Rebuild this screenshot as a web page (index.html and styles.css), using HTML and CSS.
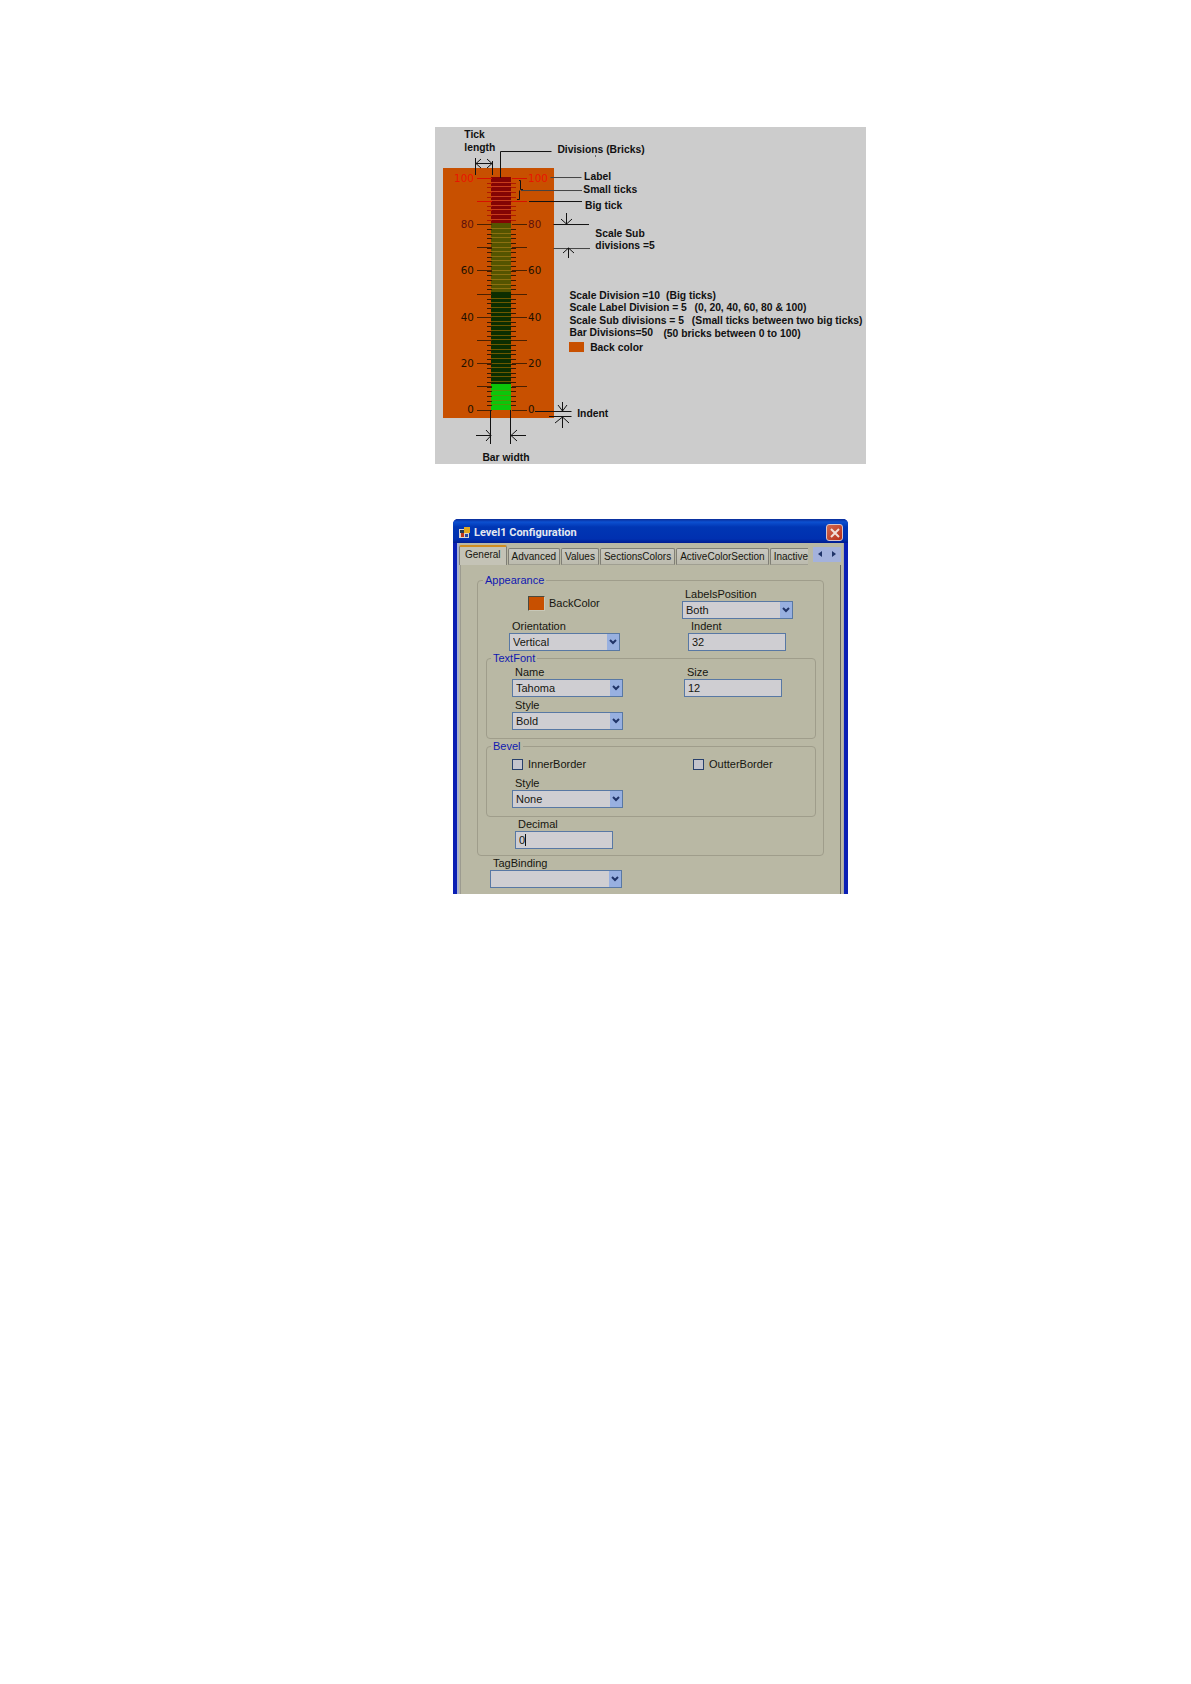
FILE: index.html
```html
<!DOCTYPE html>
<html lang="en">
<head>
<meta charset="utf-8">
<meta name="viewport" content="width=device-width, initial-scale=1">
<title>Level1 Configuration</title>
<link rel="stylesheet" href="styles.css">
</head>
<body>
<main class="page">
  <svg class="diagram" viewBox="0 0 500 391" role="img" aria-label="Level bar and its parts">
    <rect width="500" height="391" fill="#ccc"/>
    <svg width="500" height="391" viewBox="0 0 431 337">
      <rect x="8" y="41" width="111" height="250" fill="#c85000"/>
      <!-- bar sections -->
      <rect x="56" y="50" width="20" height="46" fill="#840404"/>
      <rect x="56" y="96" width="20" height="69" fill="#555400"/>
      <rect x="56" y="165" width="20" height="92" fill="#0c2e00"/>
      <rect x="56" y="257" width="20" height="26" fill="#0cc60a"/>
      <!-- brick gaps -->
      <g fill="none" stroke-width="20" stroke-dasharray="1 3.64" shape-rendering="crispEdges">
        <path d="M66 54.6V96" stroke="#c83c1c"/>
        <path d="M66 101V165" stroke="#8c7010"/>
        <path d="M66 170.6V257" stroke="#6c5800"/>
        <path d="M66 263.4V282" stroke="#4c9a08"/>
      </g>
      <!-- small ticks -->
      <g fill="none" stroke-width="5" stroke-dasharray="1 3.64" shape-rendering="crispEdges">
        <path d="M54 55.6V97M78 55.6V97" stroke="#b01800"/>
        <path d="M54 102V283M78 102V283" stroke="#3a1800"/>
      </g>
      <!-- big ticks -->
      <g fill="none" stroke-width="15" stroke-dasharray="1 22.2" shape-rendering="crispEdges">
        <path d="M49 51V96M84 51V96" stroke="#d81000"/>
        <path d="M49 97V284M84 97V284" stroke="#4a2000"/>
      </g>
      <rect x="134" y="215" width="15" height="10" fill="#c85000"/>
      <!-- leader lines and dimension arrows -->
      <g fill="none" stroke="#111" stroke-width="1">
        <path d="M65.500 51V24.500H116.500"/>
        <path d="M40.500 31V48M57.500 34V48M41 36.500H57M46 32L41 36.500L46 41M52 32L57 36.500L52 41"/>
        <path d="M115.500 50.500H146.500M86 63.500H147" stroke="#444"/>
        <path d="M84 53.500H85.500V62.500H88M84.500 63.500V72.500H82"/>
        <path d="M94 74.500H147M118.500 97.500H154"/>
        <path d="M118.500 121.500H155" stroke="#444"/>
        <path d="M131.500 86V97M126 92L131.500 97L137 92M133.500 131V121M128 126L133.500 121L139 126"/>
        <path d="M100 284.500H136.500M114 289.500H136.500"/>
        <path d="M127.500 275V284M123 278L127.500 284L132 278M127.500 301V290M120 296L127.500 290L134 296"/>
        <path d="M55.500 283V317M75.500 283V317"/>
        <path d="M41 308.500H56M51 303L56 308.500L51 314M91 308.500H76M82 303L76 308.500L82 314"/>
        <path d="M160.500 28V30" stroke="#666"/>
      </g>
    </svg>
    <g class="scale-label" text-anchor="end">
      <text class="alarm" x="45" y="64">100</text>
      <text class="warn" x="45" y="117">80</text>
      <text x="45" y="171">60</text>
      <text x="45" y="225">40</text>
      <text x="45" y="278">20</text>
      <text x="45" y="332">0</text>
    </g>
    <g class="scale-label">
      <text class="alarm" x="108" y="64">100</text>
      <text class="warn" x="108" y="117">80</text>
      <text x="108" y="171">60</text>
      <text x="108" y="225">40</text>
      <text x="108" y="278">20</text>
      <text x="108" y="332">0</text>
    </g>
    <g class="note">
      <text x="34" y="13">Tick</text>
      <text x="34" y="28">length</text>
      <text x="142" y="30">Divisions (Bricks)</text>
      <text x="173" y="62">Label</text>
      <text x="172" y="77">Small ticks</text>
      <text x="174" y="95">Big tick</text>
      <text x="186" y="128">Scale Sub</text>
      <text x="186" y="142">divisions =5</text>
      <text x="156" y="199">Scale Division =10</text>
      <text x="268" y="199">(Big ticks)</text>
      <text x="156" y="213">Scale Label Division = 5</text>
      <text x="301" y="213">(0, 20, 40, 60, 80 &amp; 100)</text>
      <text x="156" y="228">Scale Sub divisions = 5</text>
      <text x="298" y="229">(Small ticks between two big ticks)</text>
      <text x="156" y="243">Bar Divisions=50</text>
      <text x="265" y="244">(50 bricks between 0 to 100)</text>
      <text x="180" y="260">Back color</text>
      <text x="165" y="336">Indent</text>
      <text x="55" y="387">Bar width</text>
    </g>
  </svg>

  <section class="dialog" aria-labelledby="dialog-title">
    <header class="titlebar">
      <svg class="app-icon" width="11" height="11" viewBox="0 0 11 11" aria-hidden="true">
        <rect x="0" y="2" width="10" height="9" fill="#d8d4cc"/>
        <rect x="1" y="3" width="4" height="3" fill="#283c50"/>
        <rect x="5" y="0" width="6" height="6" fill="#e0a820"/>
        <rect x="2" y="6" width="3" height="4" fill="#c03818"/>
        <rect x="6" y="7" width="3" height="3" fill="#2848a0"/>
      </svg>
      <h1 class="title" id="dialog-title">Level1 Configuration</h1>
      <button class="close" type="button" aria-label="Close">
        <svg width="10" height="10" viewBox="0 0 10 10" aria-hidden="true"><path d="M1 1L9 9M9 1L1 9" stroke="#f0e0d8" stroke-width="2"/></svg>
      </button>
    </header>

    <div class="client">
      <div class="tabs">
        <div class="tab-list" role="tablist">
          <button class="tab tab-active" type="button" role="tab" aria-selected="true">General</button>
          <button class="tab" type="button" role="tab">Advanced</button>
          <button class="tab" type="button" role="tab">Values</button>
          <button class="tab" type="button" role="tab">SectionsColors</button>
          <button class="tab" type="button" role="tab">ActiveColorSection</button>
          <button class="tab tab-last" type="button" role="tab">Inactive</button>
        </div>
        <div class="tab-scroll">
          <button class="scroll" type="button" aria-label="Previous tabs"><svg width="4" height="6" viewBox="0 0 4 6"><path d="M4 0V6L0 3Z" fill="#203468"/></svg></button>
          <button class="scroll" type="button" aria-label="Next tabs"><svg width="4" height="6" viewBox="0 0 4 6"><path d="M0 0V6L4 3Z" fill="#203468"/></svg></button>
        </div>
      </div>

      <form class="panel">
        <fieldset class="group group-outer">
          <legend>Appearance</legend>
          <div class="row row-outer">
            <label class="swatch-field"><button class="swatch" type="button" aria-label="BackColor"></button>BackColor</label>
            <div class="field">
              <label for="labels-position">LabelsPosition</label>
              <div class="combo">
                <select id="labels-position"><option>Both</option></select>
                <svg class="arrow" viewBox="0 0 12 16"><path d="M3 6L6 9L9 6" /></svg>
              </div>
            </div>
          </div>
          <div class="row row-outer">
            <div class="field">
              <label for="orientation">Orientation</label>
              <div class="combo">
                <select id="orientation"><option>Vertical</option></select>
                <svg class="arrow" viewBox="0 0 12 16"><path d="M3 6L6 9L9 6" /></svg>
              </div>
            </div>
            <div class="field field-inset">
              <label for="indent">Indent</label>
              <input class="text" id="indent" type="text" value="32">
            </div>
          </div>

          <fieldset class="group group-inner">
            <legend>TextFont</legend>
            <div class="row row-inner">
              <div class="field">
                <label for="font-name">Name</label>
                <div class="combo">
                  <select id="font-name"><option>Tahoma</option></select>
                  <svg class="arrow" viewBox="0 0 12 16"><path d="M3 6L6 9L9 6" /></svg>
                </div>
              </div>
              <div class="field">
                <label for="font-size">Size</label>
                <input class="text" id="font-size" type="text" value="12">
              </div>
            </div>
            <div class="row row-inner">
              <div class="field">
                <label for="font-style">Style</label>
                <div class="combo">
                  <select id="font-style"><option>Bold</option></select>
                  <svg class="arrow" viewBox="0 0 12 16"><path d="M3 6L6 9L9 6" /></svg>
                </div>
              </div>
            </div>
          </fieldset>

          <fieldset class="group group-inner">
            <legend>Bevel</legend>
            <div class="row row-inner row-checks">
              <label class="check"><input type="checkbox">InnerBorder</label>
              <label class="check check-inset"><input type="checkbox">OutterBorder</label>
            </div>
            <div class="row row-inner">
              <div class="field">
                <label for="bevel-style">Style</label>
                <div class="combo">
                  <select id="bevel-style"><option>None</option></select>
                  <svg class="arrow" viewBox="0 0 12 16"><path d="M3 6L6 9L9 6" /></svg>
                </div>
              </div>
            </div>
          </fieldset>

          <div class="row row-outer">
            <div class="field field-inset">
              <label for="decimal">Decimal</label>
              <div class="editing"><input class="text" id="decimal" type="text" value="0"></div>
            </div>
          </div>
        </fieldset>

        <div class="field field-wide">
          <label for="tag-binding">TagBinding</label>
          <div class="combo">
            <select id="tag-binding"><option></option></select>
            <svg class="arrow" viewBox="0 0 12 16"><path d="M3 6L6 9L9 6" /></svg>
          </div>
        </div>
      </form>
    </div>
  </section>
</main>
</body>
</html>
```
FILE: styles.css
```css
* { box-sizing: border-box; }

body {
  margin: 0;
  background: #fff;
  color: #16160f;
  font: 11px/14px "Liberation Sans", Arial, sans-serif;
}

button, input, select { font: inherit; color: inherit; margin: 0; }

.page {
  display: flex;
  flex-direction: column;
  align-items: center;
  gap: 55px;
  padding: 127px 0 127px 110px;
}

/* Annotated bar diagram */
.diagram { display: block; width: 100%; max-width: 431px; }
.note { font: bold 12px "Liberation Sans", Arial, sans-serif; fill: #111; }
.scale-label { font: 12px "DejaVu Sans", Verdana, sans-serif; fill: #201000; }
.scale-label .alarm { fill: #e81400; }
.scale-label .warn { fill: #60100c; }

/* Dialog window */
.dialog {
  width: 100%;
  max-width: 395px;
  background: #0a1fb4;
  border-radius: 5px 5px 0 0;
  padding: 0 4px;
}

.titlebar {
  display: flex;
  align-items: center;
  gap: 4px;
  height: 24px;
  margin: 0 -4px;
  padding: 3px 5px 0 6px;
  border-radius: 5px 5px 0 0;
  background: linear-gradient(#0a2c98, #0c50d0 3px, #0036b4 8px, #0030b0 20px, #001c90);
}

.title {
  flex: 1;
  margin: 0;
  color: #e4e8f0;
  font: bold 11px/16px Roboto, "Noto Sans", sans-serif;
}

.close {
  display: grid;
  place-items: center;
  width: 17px;
  height: 17px;
  padding: 0;
  border: 1px solid #d8c4c8;
  border-radius: 3px;
  background: linear-gradient(135deg, #d06850, #b83018);
}

.client {
  background: #b9b8a4;
  border-left: 2px solid #a8b0d0;
  border-right: 1px solid #a9a9ac;
  padding: 2px 2px 0 0;
}

.tabs { display: flex; height: 20px; }
.tab-list { display: flex; align-items: flex-end; flex: 1; min-width: 0; overflow: hidden; }

.tab {
  flex: none;
  height: 17px;
  padding: 0 3px;
  margin-right: 1px;
  border: 1px solid #807f76;
  border-bottom-color: #a09f92;
  border-radius: 2px 2px 0 0;
  background: linear-gradient(#c8c8c0, #bcbbae);
  font-size: 10px;
}

.tab-active {
  height: 20px;
  padding: 0 5px 2px;
  border-top: 2px solid #d08c20;
  border-bottom: 0;
  background: #c4c3b6;
}

.tab-last {
  padding-right: 0;
  margin-right: 0;
  border-right: 0;
  border-top-right-radius: 0;
}

.tab-scroll { display: flex; align-self: flex-start; padding-top: 2px; }

.scroll {
  display: grid;
  place-items: center;
  width: 14px;
  height: 15px;
  padding: 0 0 2px;
  border: 0;
  background: #a4b2dc;
}

.panel {
  margin: 0 0 0 1px;
  padding: 8px 16px 6px;
  border-left: 1px solid #9c9b90;
  border-right: 1px solid #66655e;
}

.group {
  min-width: 0;
  margin: 0;
  padding: 0 0 8px;
  border: 1px solid #9f9d8b;
  border-radius: 4px;
}

.group-outer { padding-bottom: 6px; }
.group legend { margin-left: 5px; padding: 0 2px; color: #1018b0; }
.group-inner { margin: 0 7px 0 8px; }
.group-inner legend { margin-left: 4px; }

.row { display: grid; }
.row-outer { grid-template-columns: 173px 1fr; padding-left: 31px; }
.row-inner { grid-template-columns: 172px 1fr; padding-left: 25px; }
.row-inner + .row-inner { margin-top: 1px; }
.row-checks { height: 22px; align-items: center; }

.field { display: flex; flex-direction: column; max-width: 111px; }
.field label { padding-left: 3px; }
.field-inset { padding-left: 6px; }
.field-wide { max-width: 145px; padding-left: 13px; }

.text, select {
  width: 100%;
  height: 18px;
  padding: 0 3px;
  border: 1px solid #5878a4;
  border-radius: 0;
  background: #cfced2;
  appearance: none;
}

.text { width: 98px; }

.combo { display: grid; }
.combo > * { grid-area: 1 / 1; }

.arrow {
  justify-self: end;
  width: 12px;
  height: 16px;
  margin: 1px;
  background: #98b0e0;
  fill: none;
  stroke: #203468;
  stroke-width: 2;
  pointer-events: none;
}

.swatch-field { display: flex; align-items: center; gap: 4px; padding-left: 19px; }

.swatch {
  width: 17px;
  height: 15px;
  padding: 0;
  border: 1px solid #4a4a40;
  border-right-color: #c8c8b8;
  border-bottom-color: #c8c8b8;
  background: #c85000;
}

.check { display: flex; align-items: center; gap: 5px; }
.check-inset { padding-left: 9px; }

.check input {
  width: 11px;
  height: 11px;
  border: 1px solid #28406c;
  background: #c4c4cc;
  appearance: none;
}

.editing { position: relative; }

/* text caret of the field being edited */
.editing::after {
  content: "";
  position: absolute;
  left: 10px;
  top: 3px;
  width: 1px;
  height: 12px;
  background: #111;
}
```
